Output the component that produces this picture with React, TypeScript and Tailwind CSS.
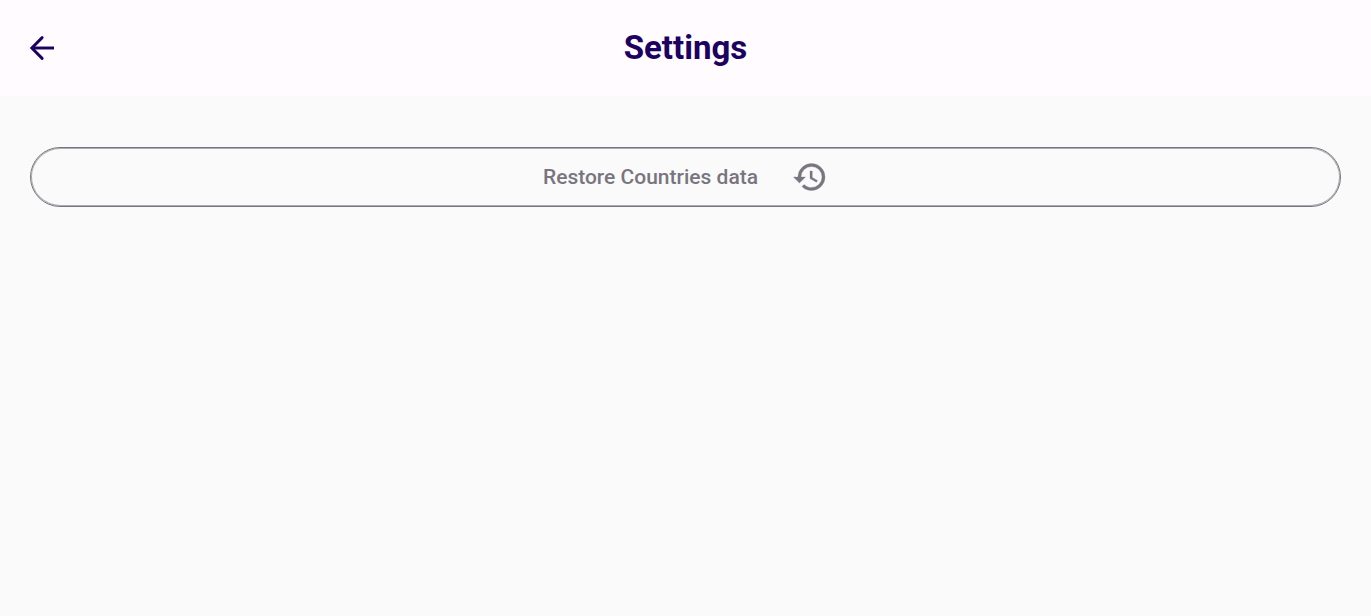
export default function App() {
  return (
    <div className="min-h-screen bg-[#fafafa] font-[Roboto,sans-serif]">
      <header className="grid h-24 grid-cols-[1fr_auto_1fr] items-center bg-[#fffbff] px-[26px]">
        <button type="button" aria-label="Back" className="size-8 text-[#1d0160]">
          <svg viewBox="0 0 24 24" fill="none" stroke="currentColor" strokeWidth="2.2" className="size-full" aria-hidden="true">
            <path d="M21 12H5" />
            <path d="M12.1 4.2L4.4 12l7.7 7.8" strokeLinecap="round" />
          </svg>
        </button>
        <h1 className="text-[33px] leading-10 font-bold text-[#1d0160]">Settings</h1>
      </header>
      <main className="px-[30px] pt-[51px]">
        <button
          type="button"
          className="flex h-[60px] w-full items-center justify-center gap-[34px] rounded-full border border-[#79757f] text-[#79757f] inset-ring-1 inset-ring-[#79757f]/60"
        >
          <span className="text-[21px] leading-7 font-medium">Restore Countries data</span>
          <svg viewBox="0 0 24 24" fill="currentColor" stroke="currentColor" strokeWidth="0.2" className="size-9" aria-hidden="true">
            <path d="M13.5 8H12v5l4.28 2.54.72-1.21-3.5-2.08V8M13 3a9 9 0 0 0-9 9H1l3.96 4.03L9 12H6a7 7 0 0 1 7-7 7 7 0 0 1 7 7 7 7 0 0 1-7 7c-1.93 0-3.68-.79-4.94-2.06l-1.42 1.42C8.27 20 10.5 21 13 21a9 9 0 0 0 9-9 9 9 0 0 0-9-9" />
          </svg>
        </button>
      </main>
    </div>
  );
}
